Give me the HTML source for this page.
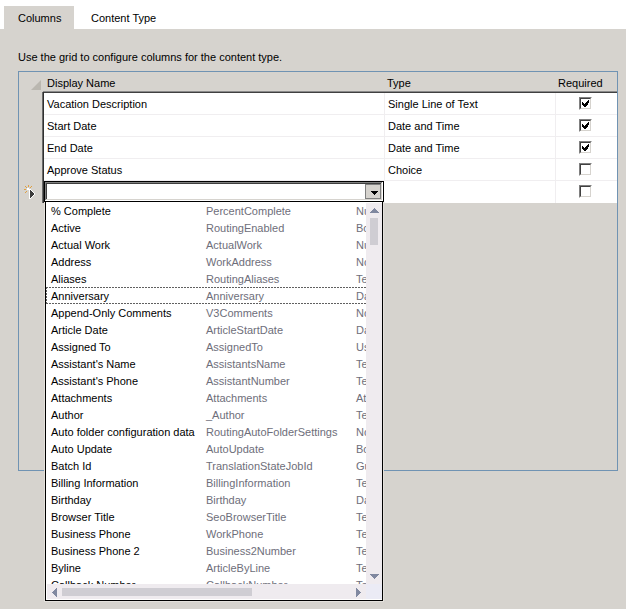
<!DOCTYPE html>
<html><head><meta charset="utf-8">
<style>
html,body{margin:0;padding:0}
body{width:626px;height:609px;overflow:hidden;background:#d6d3ce;position:relative;font-family:"Liberation Sans",sans-serif;font-size:11px;color:#000}
.a{position:absolute}
.t{position:absolute;white-space:nowrap;line-height:13px;height:13px}
.cb{position:absolute;width:13px;height:13px;box-sizing:border-box;background:#fff;border-top:1px solid #808080;border-left:1px solid #808080;border-right:1px solid #fff;border-bottom:1px solid #fff}
.cb>div{position:absolute;left:0;top:0;width:11px;height:11px;box-sizing:border-box;border-top:1px solid #404040;border-left:1px solid #404040;border-right:1px solid #d6d3ce;border-bottom:1px solid #d6d3ce}
.ck{position:absolute;left:1px;top:1px}
.li{position:absolute;left:0;height:17px;width:320px}
.li span{position:absolute;top:3px;line-height:13px;white-space:nowrap}
.c1{left:5px}
.c2{left:160px;color:#6e6e7a}
.c3{left:310px;color:#6e6e7a}
</style></head><body>
<!-- tab strip -->
<div class="a" style="left:0;top:0;width:626px;height:29px;background:#fff"></div>
<div class="a" style="left:4px;top:6px;width:70px;height:23px;background:#d6d3ce"></div>
<div class="t" style="left:18px;top:12px">Columns</div>
<div class="t" style="left:91px;top:12px">Content Type</div>

<div class="t" style="left:18px;top:51px">Use the grid to configure columns for the content type.</div>

<!-- grid border -->
<div class="a" style="left:18px;top:71px;width:598px;height:398px;border:1px solid #7093b3"></div>
<!-- header triangle -->
<svg class="a" style="left:31px;top:80px" width="10" height="10"><polygon points="0,10 10,0 10,10" fill="#bab7b0"/></svg>
<div class="t" style="left:47px;top:77px">Display Name</div>
<div class="t" style="left:387px;top:77px">Type</div>
<div class="t" style="left:558px;top:77px">Required</div>

<!-- rows white -->
<div class="a" style="left:44px;top:93px;width:573px;height:110px;background:#fff"></div>
<!-- header bottom lines -->
<div class="a" style="left:43px;top:91px;width:574px;height:1px;background:#8a8a8a"></div>
<div class="a" style="left:43px;top:92px;width:574px;height:1px;background:#404040"></div>
<!-- left dark border -->
<div class="a" style="left:42px;top:92px;width:1px;height:111px;background:#6a6a6a"></div>
<div class="a" style="left:43px;top:92px;width:1px;height:111px;background:#303030"></div>
<!-- row separators -->
<div class="a" style="left:44px;top:114px;width:573px;height:1px;background:#f0eef0"></div>
<div class="a" style="left:44px;top:136px;width:573px;height:1px;background:#f0eef0"></div>
<div class="a" style="left:44px;top:158px;width:573px;height:1px;background:#f0eef0"></div>
<div class="a" style="left:44px;top:180px;width:573px;height:1px;background:#f0eef0"></div>
<!-- column separators -->
<div class="a" style="left:384px;top:93px;width:1px;height:88px;background:#f0eef0"></div>
<div class="a" style="left:555px;top:93px;width:1px;height:110px;background:#f0eef0"></div>
<div class="a" style="left:384px;top:202px;width:1px;height:1px;background:#f0eef0"></div>

<!-- rows text -->
<div class="t" style="left:47px;top:98px">Vacation Description</div>
<div class="t" style="left:47px;top:120px">Start Date</div>
<div class="t" style="left:47px;top:142px">End Date</div>
<div class="t" style="left:47px;top:164px">Approve Status</div>
<div class="t" style="left:388px;top:98px">Single Line of Text</div>
<div class="t" style="left:388px;top:120px">Date and Time</div>
<div class="t" style="left:388px;top:142px">Date and Time</div>
<div class="t" style="left:388px;top:164px">Choice</div>

<!-- checkboxes -->
<div class="cb" style="left:579px;top:97px"><div><svg class="ck" width="7" height="7" shape-rendering="crispEdges"><path d="M6,0h1v3h-1zM5,1h1v4h-1zM4,2h1v4h-1zM3,3h1v4h-1zM2,4h1v3h-1zM1,3h1v3h-1zM0,2h1v3h-1z" fill="#000"/></svg></div></div>
<div class="cb" style="left:579px;top:119px"><div><svg class="ck" width="7" height="7" shape-rendering="crispEdges"><path d="M6,0h1v3h-1zM5,1h1v4h-1zM4,2h1v4h-1zM3,3h1v4h-1zM2,4h1v3h-1zM1,3h1v3h-1zM0,2h1v3h-1z" fill="#000"/></svg></div></div>
<div class="cb" style="left:579px;top:141px"><div><svg class="ck" width="7" height="7" shape-rendering="crispEdges"><path d="M6,0h1v3h-1zM5,1h1v4h-1zM4,2h1v4h-1zM3,3h1v4h-1zM2,4h1v3h-1zM1,3h1v3h-1zM0,2h1v3h-1z" fill="#000"/></svg></div></div>
<div class="cb" style="left:579px;top:163px"><div></div></div>
<div class="cb" style="left:579px;top:185px"><div></div></div>

<!-- new row icon -->
<svg class="a" style="left:22px;top:182px" width="16" height="18" shape-rendering="crispEdges">
  <path d="M7,7h1v10h-1zM8,7h1v1h-1zM9,8h1v1h-1zM10,9h1v1h-1zM11,10h1v1h-1zM12,11h1v2h-1zM11,13h1v1h-1zM10,14h1v1h-1zM9,15h1v1h-1zM8,16h1v1h-1z" fill="#fff"/>
  <path d="M8,8h1v8h-1zM9,9h1v6h-1zM10,10h1v4h-1zM11,11h1v2h-1z" fill="#3c3c3c"/>
  <path d="M6,3h1v1h-1zM6,4h1v1h-1zM3,4h1v1h-1zM4,5h1v1h-1zM9,4h1v1h-1zM8,5h1v1h-1zM2,7h2v1h-2zM3,10h1v1h-1zM4,9h1v1h-1z" fill="#e0a040"/>
  <path d="M5,6h2v2h-2z" fill="#fff"/>
</svg>
<!-- combo box -->
<div class="a" style="left:44px;top:181px;width:340px;height:21px;background:#000"></div>
<div class="a" style="left:45px;top:182px;width:338px;height:19px;background:#fff"></div>
<div class="a" style="left:45px;top:182px;width:337px;height:1px;background:#808080"></div>
<div class="a" style="left:45px;top:182px;width:1px;height:18px;background:#808080"></div>
<div class="a" style="left:46px;top:183px;width:335px;height:1px;background:#404040"></div>
<div class="a" style="left:46px;top:183px;width:1px;height:16px;background:#404040"></div>
<div class="a" style="left:46px;top:199px;width:336px;height:1px;background:#d6d3ce"></div>
<div class="a" style="left:381px;top:183px;width:1px;height:17px;background:#d6d3ce"></div>
<!-- combo button -->
<div class="a" style="left:365px;top:184px;width:14px;height:13px;background:#d6d3ce;border:1px solid #808080"></div>
<svg class="a" style="left:371px;top:191px" width="7" height="4" shape-rendering="crispEdges"><path d="M0,0h7v1h-7zM1,1h5v1h-5zM2,2h3v1h-3zM3,3h1v1h-1z" fill="#000"/></svg>

<!-- dropdown list: border box x45..382, y201..600 -->
<div class="a" style="left:44px;top:202px;width:1px;height:400px;background:#e4e1dc"></div>
<div class="a" style="left:44px;top:601px;width:340px;height:1px;background:#e4e1dc"></div>
<div class="a" style="left:383px;top:202px;width:1px;height:400px;background:#e4e1dc"></div>

<div class="a" style="left:45px;top:202px;width:336px;height:398px;background:#fff;border:1px solid #000;border-top:none"></div>
<div class="a" style="left:46px;top:202px;width:320px;height:382px;overflow:hidden">
<div class="li" style="top:0px"><span class="c1">% Complete</span><span class="c2">PercentComplete</span><span class="c3">Number</span></div>
<div class="li" style="top:17px"><span class="c1">Active</span><span class="c2">RoutingEnabled</span><span class="c3">Boolean</span></div>
<div class="li" style="top:34px"><span class="c1">Actual Work</span><span class="c2">ActualWork</span><span class="c3">Number</span></div>
<div class="li" style="top:51px"><span class="c1">Address</span><span class="c2">WorkAddress</span><span class="c3">Note</span></div>
<div class="li" style="top:68px"><span class="c1">Aliases</span><span class="c2">RoutingAliases</span><span class="c3">Text</span></div>
<div class="li" style="top:85px"><span class="c1">Anniversary</span><span class="c2">Anniversary</span><span class="c3">DateTime</span></div>
<div class="li" style="top:102px"><span class="c1">Append-Only Comments</span><span class="c2">V3Comments</span><span class="c3">Note</span></div>
<div class="li" style="top:119px"><span class="c1">Article Date</span><span class="c2">ArticleStartDate</span><span class="c3">DateTime</span></div>
<div class="li" style="top:136px"><span class="c1">Assigned To</span><span class="c2">AssignedTo</span><span class="c3">User</span></div>
<div class="li" style="top:153px"><span class="c1">Assistant's Name</span><span class="c2">AssistantsName</span><span class="c3">Text</span></div>
<div class="li" style="top:170px"><span class="c1">Assistant's Phone</span><span class="c2">AssistantNumber</span><span class="c3">Text</span></div>
<div class="li" style="top:187px"><span class="c1">Attachments</span><span class="c2">Attachments</span><span class="c3">Attachments</span></div>
<div class="li" style="top:204px"><span class="c1">Author</span><span class="c2">_Author</span><span class="c3">Text</span></div>
<div class="li" style="top:221px"><span class="c1">Auto folder configuration data</span><span class="c2">RoutingAutoFolderSettings</span><span class="c3">Note</span></div>
<div class="li" style="top:238px"><span class="c1">Auto Update</span><span class="c2">AutoUpdate</span><span class="c3">Boolean</span></div>
<div class="li" style="top:255px"><span class="c1">Batch Id</span><span class="c2">TranslationStateJobId</span><span class="c3">Guid</span></div>
<div class="li" style="top:272px"><span class="c1">Billing Information</span><span class="c2">BillingInformation</span><span class="c3">Text</span></div>
<div class="li" style="top:289px"><span class="c1">Birthday</span><span class="c2">Birthday</span><span class="c3">DateTime</span></div>
<div class="li" style="top:306px"><span class="c1">Browser Title</span><span class="c2">SeoBrowserTitle</span><span class="c3">Text</span></div>
<div class="li" style="top:323px"><span class="c1">Business Phone</span><span class="c2">WorkPhone</span><span class="c3">Text</span></div>
<div class="li" style="top:340px"><span class="c1">Business Phone 2</span><span class="c2">Business2Number</span><span class="c3">Text</span></div>
<div class="li" style="top:357px"><span class="c1">Byline</span><span class="c2">ArticleByLine</span><span class="c3">Text</span></div>
<div class="li" style="top:374px"><span class="c1">Callback Number</span><span class="c2">CallbackNumber</span><span class="c3">Text</span></div>

  <!-- focus rect -->
  <div class="a" style="left:0;top:85px;width:320px;height:1px;background:repeating-linear-gradient(90deg,#606060 0 2px,transparent 2px 3px)"></div>
  <div class="a" style="left:0;top:101px;width:320px;height:1px;background:repeating-linear-gradient(90deg,#606060 0 2px,transparent 2px 3px)"></div>
  <div class="a" style="left:0;top:85px;width:1px;height:17px;background:repeating-linear-gradient(180deg,#606060 0 2px,transparent 2px 3px)"></div>
</div>
<!-- v scrollbar x366..380 y203..583 -->
<div class="a" style="left:366px;top:203px;width:16px;height:381px;background:#efebef"></div>
<svg class="a" style="left:370px;top:208px" width="9" height="5" shape-rendering="crispEdges"><path d="M4,0h1v1h-1zM3,1h3v1h-3zM2,2h5v1h-5zM1,3h7v1h-7zM0,4h9v1h-9z" fill="#8088a0"/></svg>
<div class="a" style="left:370px;top:218px;width:8px;height:27px;background:#cfcdd3"></div>
<svg class="a" style="left:370px;top:574px" width="9" height="5" shape-rendering="crispEdges"><path d="M0,0h9v1h-9zM1,1h7v1h-7zM2,2h5v1h-5zM3,3h3v1h-3zM4,4h1v1h-1z" fill="#8088a0"/></svg>
<!-- h scrollbar x47..365 y584..598 -->
<div class="a" style="left:47px;top:584px;width:319px;height:15px;background:#efebef"></div>
<svg class="a" style="left:52px;top:588px" width="5" height="9" shape-rendering="crispEdges"><path d="M4,0h1v9h-1zM3,1h1v7h-1zM2,2h1v5h-1zM1,3h1v3h-1zM0,4h1v1h-1z" fill="#8088a0"/></svg>
<div class="a" style="left:62px;top:588px;width:190px;height:8px;background:#cfcdd3"></div>
<svg class="a" style="left:356px;top:588px" width="5" height="9" shape-rendering="crispEdges"><path d="M0,0h1v9h-1zM1,1h1v7h-1zM2,2h1v5h-1zM3,3h1v3h-1zM4,4h1v1h-1z" fill="#8088a0"/></svg>
<div class="a" style="left:366px;top:584px;width:16px;height:15px;background:#ebebf5"></div>
</body></html>
